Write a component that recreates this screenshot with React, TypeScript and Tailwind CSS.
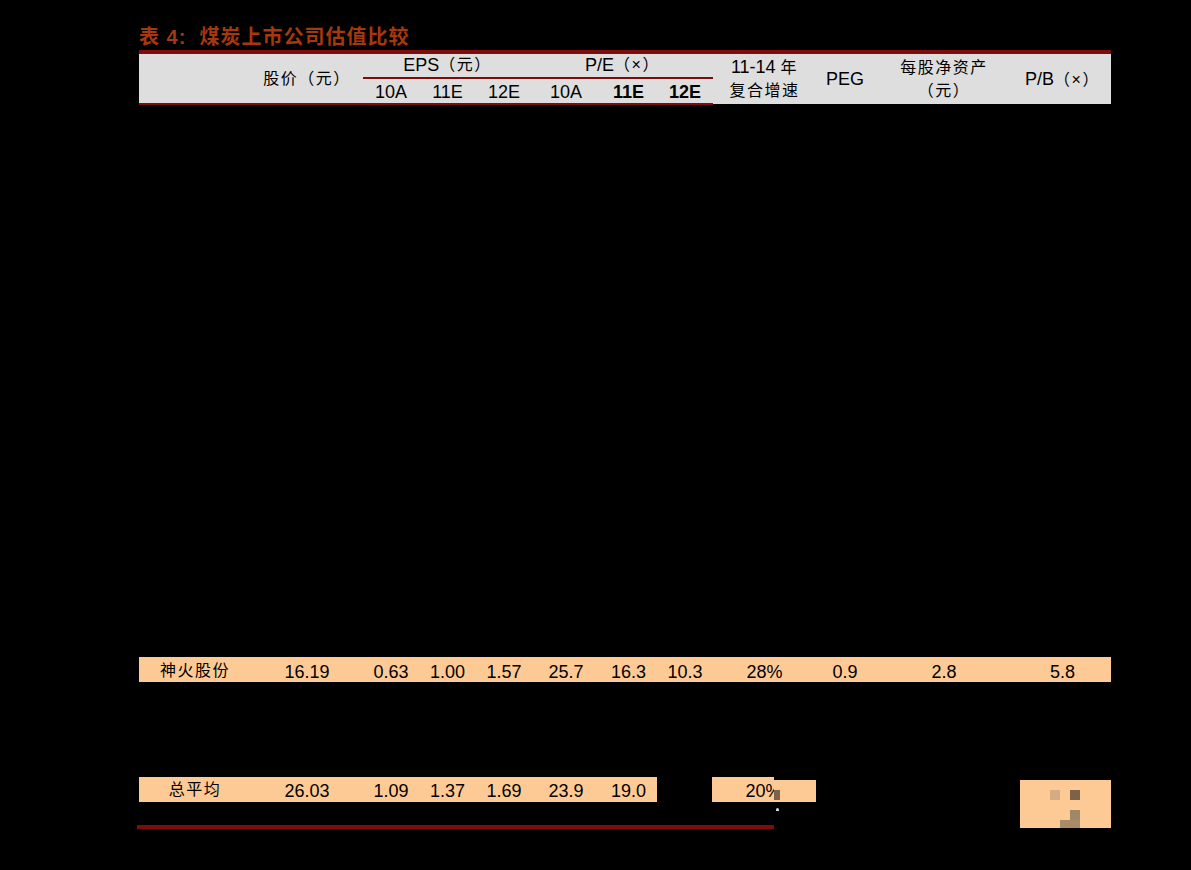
const font = "font-['Liberation_Sans','Noto_Sans_CJK_SC',sans-serif]";
const columns =
  "grid grid-cols-[112px_112px_56px_57px_56px_68px_57px_56px_103px_58px_140px_97px]";
const cjk = "text-[16px] tracking-[1.5px]";

function TableHeader() {
  const left = "flex items-center justify-center bg-[#dedede] border-b-2 border-[#7d0c0c]";
  const right = "row-span-2 h-[50px] flex flex-col items-center justify-center bg-[#dedede] leading-[23px]";
  return (
    <div className={`${columns} grid-rows-[25px_26px] w-[972px] border-t-4 border-[#7d0c0c]`}>
      <div className={`${left} row-span-2`} />
      <div className={`${left} row-span-2 ${cjk}`}>股价（元）</div>
      <div className={`${left} col-span-3 pb-[1px]`}>
        <span>EPS</span>
        <span className={cjk}>（元）</span>
      </div>
      <div className={`${left} col-span-3 pb-[1px]`}>
        <span>P/E</span>
        <span className={cjk}>（×）</span>
      </div>
      <div className={right}>
        <span className="-mt-[1px]">
          11-14 <span className={cjk}>年</span>
        </span>
        <span className={cjk}>复合增速</span>
      </div>
      <div className={`${right} pt-[1px]`}>PEG</div>
      <div className={right}>
        <span className={cjk}>每股净资产</span>
        <span className={cjk}>（元）</span>
      </div>
      <div className={`${right} pt-[1px]`}>
        <span>
          P/B<span className={cjk}>（×）</span>
        </span>
      </div>
      {["10A", "11E", "12E", "10A"].map((label, i) => (
        <div key={i} className={`${left} pt-[3px]`}>
          {label}
        </div>
      ))}
      <div className={`${left} pt-[3px] font-bold`}>11E</div>
      <div className={`${left} pt-[3px] font-bold`}>12E</div>
    </div>
  );
}

function Row({ name, values }: { name: string; values: string[] }) {
  return (
    <div className={`${columns} h-[25px] w-[972px] bg-[#fdca96]`}>
      <div className={`flex items-center justify-center pb-[1px] ${cjk}`}>{name}</div>
      {values.map((value, i) => (
        <div key={i} className="flex items-center justify-center pt-[2px]">
          {value}
        </div>
      ))}
    </div>
  );
}

function TotalRow() {
  const cell = "h-[25px] flex items-center justify-center bg-[#fdca96]";
  const values = ["26.03", "1.09", "1.37", "1.69", "23.9", "19.0"];
  return (
    <div className={`${columns} relative w-[972px]`}>
      <div className={`${cell} pt-[1px] ${cjk}`}>总平均</div>
      {values.map((value) => (
        <div key={value} className={`${cell} pt-[3px]`}>
          {value}
        </div>
      ))}
      <div className="h-[25px]" />
      {/* growth cell is cut into two heights by the mask */}
      <div className="-ml-[1px] flex h-[25px]">
        <div className={`${cell} w-[62px] pl-[41px] whitespace-nowrap pt-[3px]`}>20%</div>
        <div className="relative mt-[3px] h-[22px] w-[42px] bg-[#fdca96]">
          <div className="mt-[10px] h-[10px] w-[6px] bg-[#7c6248]" />
          <div className="absolute left-[2px] top-[28px] h-[3px] w-[3px] rounded-t-full bg-[#d8d8d8]" />
        </div>
      </div>
      <div />
      <div />
      <div className="relative ml-[6px] mt-[3px] h-[48px] w-[91px] bg-[#fdca96]">
        <div className="absolute left-[30px] top-[10px] h-[10px] w-[10px] bg-[#d4ac84]" />
        <div className="absolute left-[50px] top-[10px] h-[10px] w-[10px] bg-[#7c6248]" />
        <div className="absolute left-[50px] top-[30px] h-[10px] w-[10px] bg-[#a08766]" />
        <div className="absolute left-[40px] top-[40px] h-[8px] w-[20px] bg-[#a88c6a]" />
      </div>
    </div>
  );
}

export default function App() {
  return (
    <div className={`${font} h-[870px] w-[1191px] overflow-hidden bg-black text-[18px] text-black`}>
      <div className="pl-[139px] pt-[24px]">
        <h1 className="h-[26px] text-[20px] font-bold leading-[26px] tracking-[1px] text-[#a5380c]">
          表 4:&nbsp;&nbsp;煤炭上市公司估值比较
        </h1>
        <TableHeader />
        <div className="mt-[552px]">
          <Row
            name="神火股份"
            values={["16.19", "0.63", "1.00", "1.57", "25.7", "16.3", "10.3", "28%", "0.9", "2.8", "5.8"]}
          />
        </div>
        <div className="mt-[95px]">
          <TotalRow />
        </div>
        <div className="-ml-[2px] -mt-[3px] h-[4px] w-[637px] bg-[#7d0c0c]" />
      </div>
    </div>
  );
}
